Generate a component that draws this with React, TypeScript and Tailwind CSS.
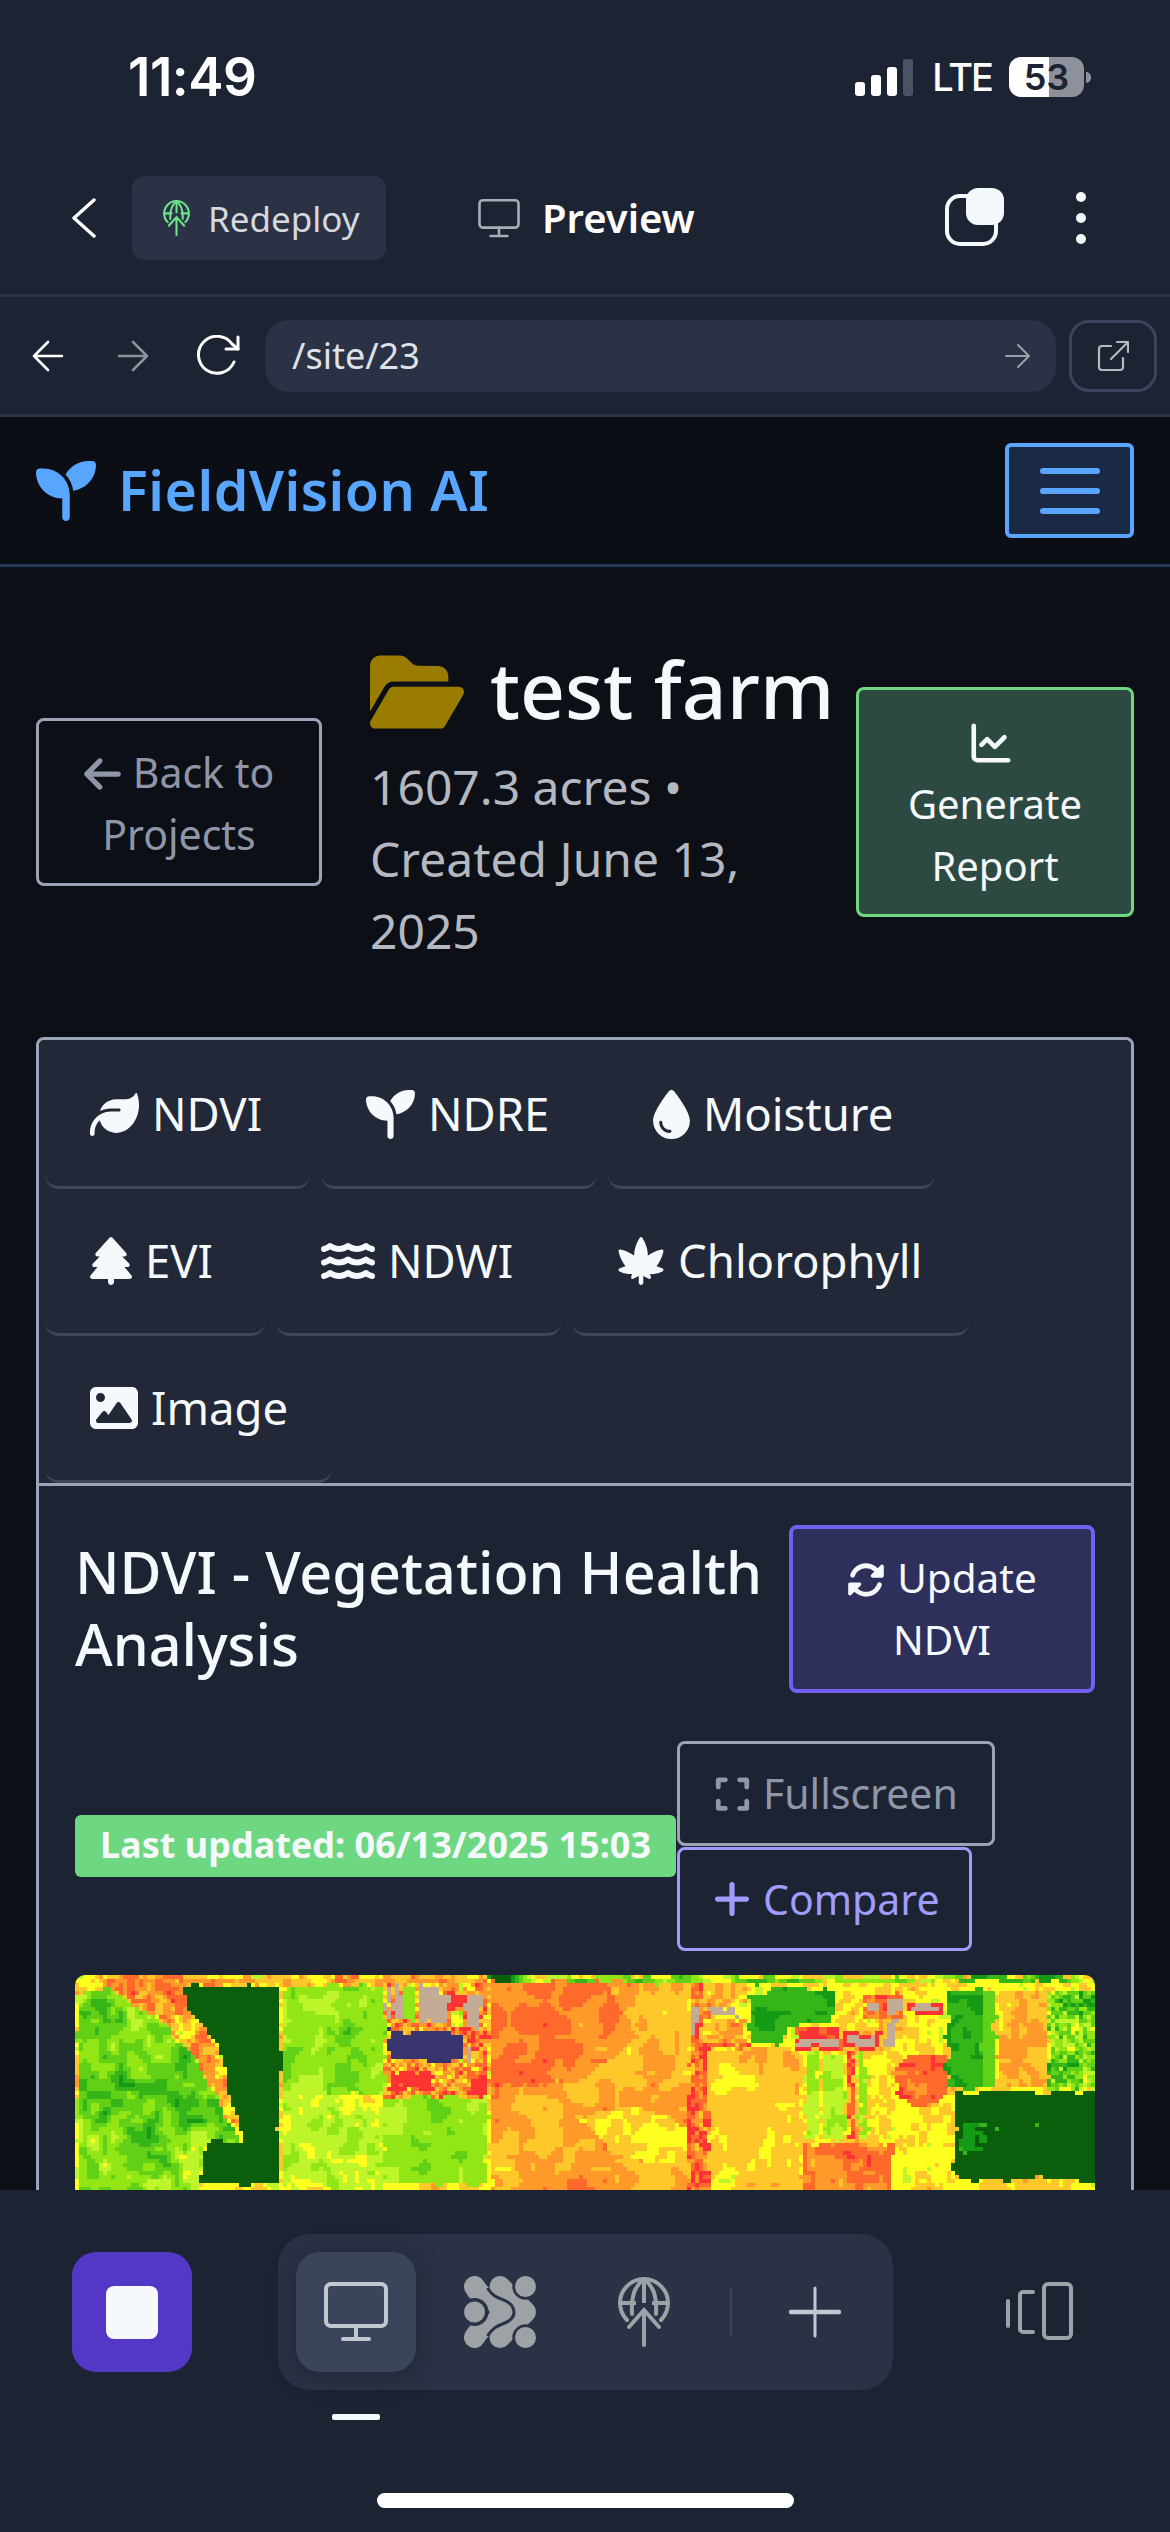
import React, { useMemo } from 'react';
import { FaArrowLeft, FaCannabis, FaDroplet, FaExpand, FaFolderOpen, FaImage, FaLeaf, FaPlus, FaRotate, FaSeedling, FaTree, FaWater } from 'react-icons/fa6';
import { ChartLine } from 'lucide-react';

// NDVI palette, low index = healthy
const PALETTE = ['#0b5e0b', '#149a14', '#36b518', '#62d016', '#93e616', '#bdf52a', '#ffff20', '#ffc82a', '#ff9a2a', '#ff6a2c', '#ff3333'];
const GRAY = '#c4ab96';
const BLUE = '#38356e';

type Rule = { r?: number[]; p?: number[][]; b: number | string; a?: number; s?: number };

const RULES: Rule[] = [
  { r: [0, 0, 1020, 220], b: 6.4, a: 1.2, s: 6 },
  { r: [0, 0, 410, 8], b: 7.5, a: 1.5, s: 8 },
  { r: [410, 0, 1020, 5], b: 3, a: 2.5, s: 14 },
  { p: [[0, 16], [34, 12], [70, 34], [104, 60], [128, 100], [166, 170], [128, 160], [120, 220], [0, 220]], b: 3.4, a: 2, s: 9 },
  { p: [[10, 4], [104, 4], [112, 34], [142, 72], [166, 156], [150, 140], [120, 84], [80, 40], [36, 12]], b: 7.4, a: 2, s: 5 },
  { p: [[108, 9], [203, 9], [203, 206], [124, 206], [128, 163], [167, 166], [139, 66], [108, 29]], b: 0 },
  { r: [206, 9, 306, 116], b: 3.8, a: 1.2, s: 9 },
  { r: [206, 116, 306, 212], b: 5, a: 1.3, s: 7 },
  { r: [306, 120, 410, 206], b: 4, a: 0.9, s: 12 },
  { r: [306, 6, 412, 120], b: 7.8, a: 2, s: 4 },
  { r: [308, 9, 313, 44], b: GRAY },
  { r: [317, 9, 324, 44], b: GRAY },
  { r: [326, 9, 338, 44], b: 4 },
  { r: [342, 8, 364, 46], b: GRAY },
  { r: [364, 19, 372, 48], b: GRAY },
  { r: [390, 19, 403, 52], b: GRAY },
  { r: [372, 20, 390, 28], b: 10 },
  { r: [376, 32, 388, 48], b: 5, a: 1, s: 5 },
  { p: [[310, 53], [385, 58], [385, 78], [365, 84], [312, 82]], b: BLUE },
  { r: [389, 74, 394, 84], b: GRAY },
  { r: [310, 96, 358, 114], b: 10, a: 0.6, s: 6 },
  { r: [392, 103, 408, 116], b: 10 },
  { r: [414, 5, 612, 216], b: 7.5, a: 1, s: 12 },
  { p: [[414, 5], [530, 5], [560, 60], [500, 105], [414, 110]], b: 8.6, a: 0.9, s: 12 },
  { p: [[500, 140], [560, 130], [612, 150], [612, 190], [540, 180]], b: 6.6, a: 0.9, s: 9 },
  { r: [612, 5, 632, 216], b: 9, a: 2, s: 3 },
  { r: [613, 29, 622, 61], b: GRAY },
  { r: [625, 6, 668, 29], b: 7.4, a: 1.6, s: 5 },
  { r: [625, 42, 668, 66], b: 7, a: 1.4, s: 5 },
  { r: [628, 31, 658, 38], b: GRAY },
  { r: [628, 66, 672, 71], b: 9.5, a: 0.8, s: 4 },
  { r: [632, 72, 722, 216], b: 7, a: 0.9, s: 9 },
  { r: [632, 196, 660, 216], b: 5.6, a: 1.2, s: 6 },
  { p: [[672, 23], [695, 13], [757, 13], [757, 48], [712, 51], [702, 66], [675, 69]], b: 1.7, a: 0.7, s: 12 },
  { r: [718, 52, 765, 72], b: 9.6, a: 0.8, s: 5 },
  { r: [720, 63, 763, 68], b: GRAY },
  { r: [768, 56, 804, 72], b: 10 },
  { r: [770, 59, 802, 69], b: GRAY },
  { r: [788, 16, 826, 42], b: 9, a: 1.2, s: 4 },
  { r: [790, 26, 800, 34], b: GRAY },
  { r: [810, 24, 824, 36], b: GRAY },
  { r: [808, 43, 818, 69], b: GRAY },
  { r: [830, 26, 866, 37], b: 10 },
  { r: [832, 29, 865, 34], b: GRAY },
  { r: [728, 76, 812, 166], b: 6.4, a: 0.9, s: 5 },
  { r: [729, 76, 741, 160], b: 4.5, a: 0.9, s: 6 },
  { r: [745, 76, 768, 163], b: 4.6, a: 0.9, s: 6 },
  { r: [772, 76, 777, 163], b: 9.2, a: 0.7, s: 4 },
  { r: [782, 76, 790, 160], b: 4, a: 0.9, s: 5 },
  { r: [725, 166, 815, 216], b: 8.8, a: 1.4, s: 7 },
  { p: [[818, 90], [835, 76], [868, 76], [868, 122], [840, 132], [820, 115]], b: 9.3, a: 1.1, s: 8 },
  { r: [818, 129, 868, 216], b: 6.4, a: 1, s: 6 },
  { r: [870, 14, 917, 111], b: 1.9, a: 0.8, s: 10 },
  { r: [905, 14, 917, 111], b: 3, a: 0.4, s: 14 },
  { r: [920, 14, 970, 111], b: 7.2, a: 0.9, s: 7 },
  { r: [972, 14, 1020, 113], b: 3.4, a: 2, s: 4 },
  { r: [878, 116, 1020, 203], b: 0 },
  { r: [885, 149, 905, 176], b: 1, a: 0.8, s: 6 },
  { r: [900, 148, 960, 150], b: 2 },
];

const hash = (i: number, j: number) => {
  const v = Math.sin(i * 127.1 + j * 311.7) * 43758.5453;
  return v - Math.floor(v);
};

const noise = (x: number, y: number) => {
  const i = Math.floor(x);
  const j = Math.floor(y);
  const u = x - i;
  const v = y - j;
  const top = hash(i, j) * (1 - u) + hash(i + 1, j) * u;
  const bottom = hash(i, j + 1) * (1 - u) + hash(i + 1, j + 1) * u;
  return top * (1 - v) + bottom * v;
};

const inPoly = (p: number[][], x: number, y: number) => {
  let inside = false;
  for (let a = 0, b = p.length - 1; a < p.length; b = a++) {
    if (p[a][1] > y !== p[b][1] > y && x < ((p[b][0] - p[a][0]) * (y - p[a][1])) / (p[b][1] - p[a][1]) + p[a][0]) inside = !inside;
  }
  return inside;
};

const colorAt = (px: number, py: number) => {
  // wobble the sample point so field edges are not ruler straight
  const x = px + (noise(px / 10 + 7, py / 10) - 0.5) * 7;
  const y = py + (noise(px / 10, py / 10 + 7) - 0.5) * 7;
  let hit: Rule = RULES[0];
  for (const rule of RULES) {
    if (rule.r ? x >= rule.r[0] && x < rule.r[2] && y >= rule.r[1] && y < rule.r[3] : inPoly(rule.p!, x, y)) hit = rule;
  }
  if (typeof hit.b === 'string') return hit.b;
  const s = hit.s ?? 8;
  const n = 0.5 * noise(px / (s * 3), py / (s * 3)) + 0.5 * noise(px / s + 40, py / s + 40);
  const level = Math.round(hit.b + (hit.a ?? 0) * (n - 0.5) * 3.4);
  return PALETTE[Math.max(0, Math.min(10, level))];
};

const HeatMap = () => {
  const cells = useMemo(() => {
    const out: { x: number; y: number; w: number; c: string }[] = [];
    for (let y = 0; y < 220; y += 4) {
      let start = 0;
      let cur = colorAt(0, y);
      for (let x = 4; x <= 1020; x += 4) {
        const c = x < 1020 ? colorAt(x, y) : '';
        if (c !== cur) {
          out.push({ x: start, y, w: x - start, c: cur });
          start = x;
          cur = c;
        }
      }
    }
    return out;
  }, []);
  return (
    <svg viewBox="0 0 1020 220" className="block h-[220px] w-[1020px]" shapeRendering="crispEdges">
      {cells.map((cell) => (
        <rect key={`${cell.x}-${cell.y}`} x={cell.x} y={cell.y} width={cell.w} height={4} fill={cell.c} />
      ))}
    </svg>
  );
};

const DeployIcon = ({ className }: { className: string }) => (
  <svg viewBox="0 0 52 70" fill="none" stroke="currentColor" strokeWidth="4" strokeLinecap="round" className={className}>
    <path d="M9 43A24 24 0 1 1 43 43" />
    <path d="M2 26H18M34 26H50M26 2V26" strokeLinecap="butt" />
    <path d="M26 2C17 9 13 18 14 37M26 2C35 9 39 18 38 37" />
    <path d="M26 68V34M11 50L26 33L41 50" />
  </svg>
);

const MonitorIcon = ({ className }: { className: string }) => (
  <svg viewBox="0 0 64 60" fill="none" stroke="currentColor" strokeWidth="4" strokeLinejoin="round" className={className}>
    <rect x="2" y="2" width="60" height="42" rx="5" />
    <path d="M32 44V56M19 57H45" strokeLinecap="round" />
  </svg>
);

const BlobIcon = () => (
  <svg viewBox="0 0 72 72" className="h-[72px] w-[72px]">
    <path d="M10.5 10.5C16 20 24 24 30 25C38 27 38 45 30 47C24 48 16 52 10.5 61.5" fill="none" stroke="#9da2a6" strokeWidth="21" strokeLinecap="round" strokeLinejoin="round" />
    <circle cx="10.5" cy="36" r="14" fill="#2b3245" />
    <path d="M36 10.5L61.5 36L36 61.5" fill="none" stroke="#9da2a6" strokeWidth="21" strokeLinecap="round" strokeLinejoin="round" />
    <path d="M23.5 12C32 26 42 21 48 30C51 35 51 39 47 43C41 50 32 46 23.5 60" fill="none" stroke="#2b3245" strokeWidth="3" />
    <circle cx="61.5" cy="10.5" r="13.2" fill="#2b3245" />
    <circle cx="61.5" cy="61.5" r="13.2" fill="#2b3245" />
    <g fill="#9da2a6">
      <circle cx="10.5" cy="36" r="10.5" />
      <circle cx="61.5" cy="10.5" r="10.5" />
      <circle cx="61.5" cy="61.5" r="10.5" />
    </g>
  </svg>
);

const tabs = [
  { label: 'NDVI', icon: <FaLeaf className="h-[49px] w-[49px] shrink-0" />, width: 'w-[265px]' },
  { label: 'NDRE', icon: <FaSeedling className="h-[49px] w-[49px] shrink-0" />, width: 'w-[276px]' },
  { label: 'Moisture', icon: <FaDroplet className="h-[49px] w-[37px] shrink-0" />, width: 'w-[327px]' },
  { label: 'EVI', icon: <FaTree className="h-[48px] w-[42px] shrink-0" />, width: 'w-[220px]' },
  { label: 'NDWI', icon: <FaWater className="h-[48px] w-[54px] shrink-0" />, width: 'w-[285px]' },
  { label: 'Chlorophyll', icon: <FaCannabis className="h-[48px] w-[48px] shrink-0" />, width: 'w-[397px]' },
  { label: 'Image', icon: <FaImage className="h-[48px] w-[48px] shrink-0" />, width: 'w-[287px]' },
];

export default function App() {
  return (
    <div className="flex h-[2532px] w-[1170px] flex-col overflow-hidden bg-[#1c2333] font-['Noto_Sans',sans-serif] text-[#f5f9fc]">
      {/* iOS status bar */}
      <div className="flex h-[154px] shrink-0 items-center justify-between pl-[128px] pr-[79px] font-['Inter',sans-serif] text-white">
        <span className="text-[53px] font-semibold leading-none tracking-[-0.5px]">11:49</span>
        <div className="flex items-center">
          <div className="flex items-end gap-[6px]">
            <div className="h-[14px] w-[10px] rounded-[3px] bg-white" />
            <div className="h-[21px] w-[10px] rounded-[3px] bg-white" />
            <div className="h-[29px] w-[10px] rounded-[3px] bg-white" />
            <div className="h-[37px] w-[10px] rounded-[3px] bg-[#4b5263]" />
          </div>
          <span className="ml-[19px] text-[38px] font-medium leading-none tracking-[-2px]">LTE</span>
          <div className="ml-[17px] flex h-[40px] w-[75px] items-center justify-center rounded-[12px] bg-[linear-gradient(90deg,#ffffff_40px,#8e9199_40px)]">
            <span className="text-[36px] font-semibold leading-none text-[#1c2333]">53</span>
          </div>
          <div className="ml-[2px] h-[11px] w-[5px] rounded-r-full bg-[#8e9199]" />
        </div>
      </div>

      {/* Replit top bar */}
      <div className="flex h-[143px] shrink-0 items-start border-b-[3px] border-[#2b3245] pt-[22px]">
        <svg viewBox="0 0 24 40" fill="none" stroke="white" strokeWidth="3.4" strokeLinecap="round" strokeLinejoin="round" className="ml-[72px] mt-[22px] h-[40px] w-[24px]">
          <path d="M22 2L2 20L22 38" />
        </svg>
        <div className="ml-[36px] flex h-[84px] w-[254px] items-center rounded-[12px] bg-[#2b3245] pl-[31px]">
          <DeployIcon className="h-[36px] w-[27px] text-[#6fe38a]" />
          <span className="ml-[18px] text-[35px] leading-none text-[#d5d8de]">Redeploy</span>
        </div>
        <MonitorIcon className="ml-[92px] mt-[23px] h-[39px] w-[42px] text-[#a9adb5]" />
        <span className="ml-[22px] mt-[19px] text-[40px] font-semibold leading-[46px] text-white">Preview</span>
        <svg viewBox="0 0 59 58" className="ml-auto mt-[12px] h-[58px] w-[59px]">
          <rect x="2" y="8" width="49" height="48" rx="13" fill="none" stroke="#f5f9fc" strokeWidth="4" />
          <rect x="21" y="0" width="38" height="37" rx="12" fill="#f5f9fc" />
        </svg>
        <div className="ml-[72px] mr-[84px] mt-[16px] flex flex-col gap-[11px]">
          <div className="h-[10px] w-[10px] rounded-full bg-[#f5f9fc]" />
          <div className="h-[10px] w-[10px] rounded-full bg-[#f5f9fc]" />
          <div className="h-[10px] w-[10px] rounded-full bg-[#f5f9fc]" />
        </div>
      </div>

      {/* webview url bar */}
      <div className="flex h-[120px] shrink-0 items-center border-b-[3px] border-[#2b3245]">
        <svg viewBox="0 0 32 32" fill="none" stroke="white" strokeWidth="2.6" strokeLinecap="round" strokeLinejoin="round" className="ml-[32px] h-[32px] w-[32px]">
          <path d="M30 16H2M16 2L2 16L16 30" />
        </svg>
        <svg viewBox="0 0 32 32" fill="none" stroke="#8e9199" strokeWidth="2.6" strokeLinecap="round" strokeLinejoin="round" className="ml-[53px] h-[32px] w-[32px]">
          <path d="M2 16H30M16 2L30 16L16 30" />
        </svg>
        <svg viewBox="0 0 44 42" fill="none" stroke="white" strokeWidth="3" strokeLinecap="round" strokeLinejoin="round" className="ml-[47px] h-[42px] w-[44px]">
          <path d="M38 27A18.5 18.5 0 1 1 36 9L42 14" />
          <path d="M42 2V14H30" />
        </svg>
        <div className="ml-[25px] flex h-[72px] w-[791px] items-center justify-between rounded-[24px] bg-[#2b3245] pl-[27px] pr-[26px]">
          <span className="text-[36px] leading-none text-[#dfe2e8]">/site/23</span>
          <svg viewBox="0 0 25 24" fill="none" stroke="#9b9ea6" strokeWidth="2" strokeLinecap="round" strokeLinejoin="round" className="h-[24px] w-[25px]">
            <path d="M1 12H24M13 1L24 12L13 23" />
          </svg>
        </div>
        <div className="ml-[13px] flex h-[72px] w-[88px] items-center justify-center rounded-[20px] border-[3px] border-[#3c445c]">
          <svg viewBox="0 0 32 32" fill="none" stroke="#b6b9c0" strokeWidth="2.2" strokeLinecap="round" strokeLinejoin="round" className="h-[32px] w-[32px]">
            <path d="M14 6H5A3 3 0 0 0 2 9V27A3 3 0 0 0 5 30H23A3 3 0 0 0 26 27V18" />
            <path d="M14 19L31 2M20 2H31V12" />
          </svg>
        </div>
      </div>

      {/* app nav */}
      <div className="flex h-[150px] shrink-0 items-center justify-between border-b-[3px] border-[#263a55] bg-[#0b0e14] pl-[36px] pr-[36px]">
        <div className="flex items-center">
          <FaSeedling className="h-[60px] w-[60px] text-[#58a6ff]" />
          <span className="ml-[22px] pb-[2px] text-[55.5px] font-semibold leading-none tracking-[0.5px] text-[#58a6ff]">FieldVision AI</span>
        </div>
        <div className="flex h-[95px] w-[129px] flex-col items-center justify-center gap-[14px] rounded-[6px] border-[4px] border-[#58a6ff] bg-[#1a2a44]">
          <div className="h-[6px] w-[60px] rounded-full bg-[#58a6ff]" />
          <div className="h-[6px] w-[60px] rounded-full bg-[#58a6ff]" />
          <div className="h-[6px] w-[60px] rounded-full bg-[#58a6ff]" />
        </div>
      </div>

      {/* page */}
      <div className="min-h-0 flex-1 overflow-hidden bg-[#0c0f16] px-[36px] pt-[69px]">
        <div className="flex items-center">
          <button className="h-[168px] w-[286px] shrink-0 rounded-[8px] border-[3px] border-[#9ba3b8] pt-[2px] text-[41px] leading-[62px] text-[#8f96a8]">
            <FaArrowLeft className="mr-[12px] inline h-[42px] w-[37px] align-[-7px]" />
            Back to
            <br />
            Projects
          </button>
          <div className="ml-[48px] w-[486px] shrink-0">
            <div className="flex h-[112px] items-center gap-[26px]">
              <FaFolderOpen className="h-[84px] w-[94px] text-[#9a7d00]" />
              <h1 className="pb-[6px] text-[78.5px] font-medium leading-none text-[#f5f9fc]">test farm</h1>
            </div>
            <p className="mt-[3px] text-[48px] leading-[72px] text-[#b4b8c0]">
              1607.3 acres •<br />
              Created June 13,
              <br />
              2025
            </p>
          </div>
          <button className="flex h-[230px] w-[278px] shrink-0 flex-col items-center rounded-[8px] border-[3px] border-[#6dd881] bg-[#2d4a42] pt-[30px] text-[40px] leading-[62px] text-[#f5f9fc]">
            <ChartLine className="-ml-[8px] h-[46px] w-[46px]" strokeWidth={2.4} />
            <span className="mt-[7px]">
              Generate
              <br />
              Report
            </span>
          </button>
        </div>

        <div className="mt-[70px] rounded-[8px] border-[3px] border-[#9ba3b8] bg-[#1c2333]">
          <div className="flex flex-wrap gap-x-[11px] rounded-t-[6px] border-b-[3px] border-[#9ba3b8] bg-[#222838] px-[6px] pt-[2px]">
            {tabs.map((tab) => (
              <div key={tab.label} className={`${tab.width} flex h-[147px] items-center gap-[13px] rounded-b-[14px] border-b-[3px] border-[#3f4656] pl-[45px] text-[45.5px] leading-none text-[#f5f9fc]`}>
                {tab.icon}
                <span>{tab.label}</span>
              </div>
            ))}
          </div>

          <div className="px-[36px] pt-[39px]">
            <div className="flex items-center justify-between">
              <h2 className="w-[711px] pb-[2px] text-[57.5px] font-medium leading-[72px] text-[#f5f9fc]">NDVI - Vegetation Health Analysis</h2>
              <button className="h-[168px] w-[306px] shrink-0 rounded-[8px] border-[4px] border-[#7360f2] bg-[#2e2f5b] text-[40.5px] leading-[62px] text-[#f5f9fc]">
                <FaRotate className="mr-[12px] inline h-[38px] w-[38px] align-[-6px]" />
                Update
                <br />
                NDVI
              </button>
            </div>

            <div className="mt-[48px] flex items-center">
              <span className="flex h-[62px] w-[601px] shrink-0 items-center justify-center rounded-[6px] bg-[#6dd881] pb-[3px] text-[36px] font-bold leading-none text-[#f5f9fc]">Last updated: 06/13/2025 15:03</span>
              <div className="ml-[1px] flex flex-col items-start gap-[1px]">
                <button className="flex h-[105px] w-[318px] items-center rounded-[8px] border-[3px] border-[#9ba3b8] pl-[34px] text-[41px] leading-none text-[#8f96a8]">
                  <FaExpand className="h-[38px] w-[37px]" />
                  <span className="ml-[12px]">Fullscreen</span>
                </button>
                <button className="flex h-[104px] w-[295px] items-center rounded-[8px] border-[3px] border-[#a29bfe] pl-[31px] text-[41px] leading-none text-[#a29bfe]">
                  <FaPlus className="h-[42px] w-[42px]" />
                  <span className="ml-[10px]">Compare</span>
                </button>
              </div>
            </div>

            <div className="mt-[24px] overflow-hidden rounded-t-[10px]">
              <HeatMap />
            </div>
          </div>
        </div>
      </div>

      {/* bottom tool dock */}
      <div className="h-[342px] shrink-0 bg-[#1c2333] pt-[44px]">
        <div className="flex items-center pl-[72px]">
          <div className="flex h-[120px] w-[120px] items-center justify-center rounded-[24px] bg-[#5338c8]">
            <div className="h-[53px] w-[52px] rounded-[8px] bg-[#f5f9fc]" />
          </div>
          <div className="ml-[86px] flex h-[156px] w-[615px] items-center rounded-[32px] bg-[#2b3245] pl-[18px]">
            <div className="flex h-[120px] w-[120px] items-center justify-center rounded-[24px] bg-[#3c445c] shadow-[0_4px_24px_rgba(20,24,38,0.45)]">
              <MonitorIcon className="h-[60px] w-[64px] text-[#c2c8d0]" />
            </div>
            <div className="ml-[48px]">
              <BlobIcon />
            </div>
            <DeployIcon className="ml-[82px] h-[70px] w-[52px] text-[#9da2a6]" />
            <div className="ml-[60px] h-[48px] w-[2px] bg-[#3c445c]" />
            <svg viewBox="0 0 52 52" fill="none" stroke="#c2c8d0" strokeLinecap="round" className="ml-[57px] h-[52px] w-[52px]">
              <path d="M2 26H50" strokeWidth="4.5" />
              <path d="M26 2V50" strokeWidth="3" />
            </svg>
          </div>
          <svg viewBox="0 0 68 60" fill="none" stroke="#9da2a6" strokeWidth="4" strokeLinecap="round" strokeLinejoin="round" className="ml-[112px] h-[60px] w-[68px]">
            <rect x="39" y="2" width="27" height="54" rx="4" />
            <path d="M28 10H18A3 3 0 0 0 15 13V47A3 3 0 0 0 18 50H28" />
            <path d="M3 19V44" />
          </svg>
        </div>
        <div className="ml-[332px] mt-[24px] h-[6px] w-[48px] rounded-[2px] bg-[#f5f9fc]" />
        <div className="ml-[377px] mt-[73px] h-[15px] w-[417px] rounded-full bg-white" />
      </div>
    </div>
  );
}
